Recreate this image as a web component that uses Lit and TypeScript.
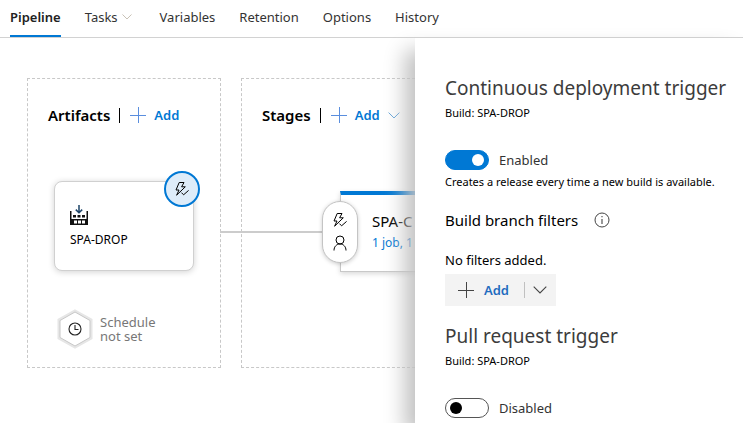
import { LitElement, html, css, svg } from "lit";
import { customElement, property, state } from "lit/decorators.js";

const plusIcon = svg`<svg class="plus" viewBox="0 0 16 16" width="16" height="16" aria-hidden="true"><path d="M8.5 0v16M0 8.5h16" fill="none" stroke="currentColor"/></svg>`;

const chevronIcon = (width: number) => svg`<svg class="chevron" viewBox="0 0 14 8" width=${width} aria-hidden="true"><path d="M0.7 0.7 7 7 13.3 0.7" fill="none" stroke="currentColor" stroke-width="1.1"/></svg>`;

const triggerIcon = svg`<svg viewBox="0 0 16 16" width="16" height="16" aria-hidden="true"><path d="M5.2 1.5H10L7.6 5.8H11.3L2.6 14.2 5 9H2Z" fill="none" stroke="currentColor" stroke-linejoin="round"/><path d="M7.4 11.6 9.6 13.8 14.6 9.4" fill="none" stroke="currentColor"/></svg>`;

const personIcon = svg`<svg viewBox="0 0 16 16" width="16" height="16" aria-hidden="true"><circle cx="8" cy="5" r="4" fill="none" stroke="currentColor"/><path d="M2 15.5C2 11.6 4.6 9 8 9S14 11.6 14 15.5" fill="none" stroke="currentColor"/></svg>`;

const buildIcon = svg`<svg viewBox="0 0 18 20" width="18" height="20" aria-hidden="true"><path d="M9 0v8M5.8 4.6 9 7.8 12.2 4.6" fill="none" stroke="#1d4468" stroke-width="1.5"/><path d="M0 6h1.5v8h15V6H18v14H0Z" fill="#111"/><path d="M3 10h3v2.5H3zM7.5 10h3v2.5h-3zM12 10h3v2.5h-3z" fill="#111"/><path d="M4 15.5h3v3H4zM8 15.5h3v3H8zM12 15.5h3v3h-3z" fill="#fff"/></svg>`;

const scheduleIcon = svg`<svg viewBox="0 0 36 40" width="36" height="40" aria-hidden="true"><path d="M18 2 34 11V29L18 38 2 29V11Z" fill="#fff" stroke="#e6e6e6" stroke-width="3"/><path d="M18 3 33 11.5V28.5L18 37 3 28.5V11.5Z" fill="#fff" stroke="#c8c8c8"/><circle cx="18" cy="20" r="6" fill="none" stroke="#222" stroke-width="1.1"/><path d="M18 16v4.5h3.5" fill="none" stroke="#222" stroke-width="1.1"/></svg>`;

const infoIcon = svg`<svg viewBox="0 0 16 16" width="16" height="16" aria-hidden="true"><circle cx="8" cy="8" r="7" fill="none" stroke="#444"/><path d="M8 7v5M8 4v1.3" stroke="#444" stroke-width="1.1"/></svg>`;

const controls = css`
  * { box-sizing: border-box; }
  h2, h3, p { margin: 0; font-weight: 400; }
  svg { display: block; flex: none; }
  button { font: inherit; color: inherit; background: none; border: 0; padding: 0; cursor: pointer; }
`;

@customElement("pipeline-tabs")
class PipelineTabs extends LitElement {
  @state() current = "Pipeline";
  tabs = ["Pipeline", "Tasks", "Variables", "Retention", "Options", "History"];

  static styles = [controls, css`
    :host { display: block; }
    nav { display: flex; gap: 24px; height: 38px; padding: 0 10px; border-bottom: 1px solid #d2d2d2; }
    a { display: flex; align-items: center; gap: 4px; padding-bottom: 1px; color: #333; text-decoration: none; border-bottom: 2px solid transparent; }
    a.current { border-bottom-color: #0078d4; font-weight: 600; color: #222; }
    .chevron { color: #b8b0a0; margin-right: 4px; }
  `];

  render() {
    return html`<nav>${this.tabs.map((name) => html`
      <a href="#${name}" class=${name === this.current ? "current" : ""} @click=${() => (this.current = name)}>${name}${name === "Tasks" ? chevronIcon(10) : ""}</a>`)}</nav>`;
  }
}

@customElement("toggle-switch")
class ToggleSwitch extends LitElement {
  @property({ type: Boolean }) on = false;

  static styles = [controls, css`
    :host { display: block; }
    label { display: flex; align-items: center; gap: 10px; height: 20px; color: #333; }
    input { appearance: none; display: flex; align-items: center; width: 44px; height: 20px; margin: 0; padding: 0 4px; border: 1px solid #555; border-radius: 10px; background: #fff; }
    input::before { content: ""; width: 12px; height: 12px; border-radius: 6px; background: #000; }
    input:checked { justify-content: flex-end; background: #0078d4; border-color: #0078d4; }
    input:checked::before { background: #fff; }
  `];

  render() {
    return html`<label><input type="checkbox" role="switch" .checked=${this.on}
      @change=${(e: Event) => (this.on = (e.target as HTMLInputElement).checked)}>${this.on ? "Enabled" : "Disabled"}</label>`;
  }
}

@customElement("pipeline-canvas")
class PipelineCanvas extends LitElement {
  static styles = [controls, css`
    :host { display: flex; align-items: flex-start; gap: 20px; padding: 40px 0 40px 27px; overflow: hidden; }
    .group { flex: none; height: 290px; border: 1px dashed #c8c8c8; padding: 20px; }
    .artifacts { width: 194px; }
    .stages { width: 320px; }
    .head { display: flex; align-items: center; height: 32px; color: #000; }
    .head h2 { font-size: 15px; font-weight: 600; line-height: 32px; }
    .bar { width: 1px; height: 15px; margin: 0 10px 0 9px; background: #000; }
    .add { display: flex; align-items: center; gap: 8px; color: #0078d4; font-weight: 600; }
    .plus { color: #5a8ede; }
    .add .chevron { color: #5b9fd8; }
    .artifact { position: relative; display: flex; flex-direction: column; gap: 5px; width: 140px; height: 90px; margin: 50px 0 38px 6px; padding: 23px 15px; border: 1px solid #d0d0d0; border-radius: 8px; background: #fff; box-shadow: 0 1px 6px rgba(0, 0, 0, .18); color: #000; font-size: 12px; line-height: 20px; }
    .trigger { position: absolute; top: -11px; right: -7px; display: grid; place-items: center; width: 36px; height: 36px; border: 2px solid #0078d4; border-radius: 18px; background: #deecf9; }
    .schedule { display: flex; align-items: center; gap: 7px; margin-left: 9px; color: #777; line-height: 14px; text-align: left; }
    .flow { display: flex; align-items: center; margin: 60px 0 0 -42px; }
    .link { width: 102px; height: 2px; background: #ccc; }
    .conditions { z-index: 1; display: flex; flex-direction: column; justify-content: center; align-items: center; gap: 7px; width: 36px; height: 62px; border: 1px solid #c4c4c4; border-radius: 18px; background: #fff; box-shadow: 0 1px 4px rgba(0, 0, 0, .2); }
    .stage { flex: 1; height: 81px; margin-left: -18px; padding: 16px 31px; border: 1px solid #c8c8c8; border-top: 4px solid #0078d4; background: #fff; box-shadow: 0 2px 5px rgba(0, 0, 0, .15); color: #000; white-space: nowrap; }
    .stage h3 { font-size: 15px; line-height: 20px; }
    .stage a { color: #0078d4; font-size: 12px; line-height: 24px; text-decoration: none; }
  `];

  render() {
    return html`
      <section class="group artifacts">
        <div class="head"><h2>Artifacts</h2><span class="bar"></span><button class="add">${plusIcon}Add</button></div>
        <div class="artifact">${buildIcon}<span>SPA-DROP</span>
          <button class="trigger" aria-label="Continuous deployment trigger">${triggerIcon}</button>
        </div>
        <button class="schedule">${scheduleIcon}<span>Schedule<br>not set</span></button>
      </section>
      <section class="group stages">
        <div class="head"><h2>Stages</h2><span class="bar"></span><button class="add">${plusIcon}Add${chevronIcon(12)}</button></div>
        <div class="flow">
          <span class="link"></span>
          <button class="conditions" aria-label="Pre-deployment conditions">${triggerIcon}${personIcon}</button>
          <div class="stage"><h3>SPA-C</h3><a href="#stage">1 job, 1</a></div>
        </div>
      </section>`;
  }
}

@customElement("trigger-panel")
class TriggerPanel extends LitElement {
  static styles = [controls, css`
    :host { display: block; box-sizing: border-box; padding: 36px 0 0 30px; background: #fff; white-space: nowrap; color: #000; }
    h2 { font-size: 19px; line-height: 28px; color: #3c3c3c; }
    .source { margin: 3px 0 29px; font-size: 11px; line-height: 16px; }
    .note { margin-top: 4px; font-size: 11px; line-height: 16px; }
    .filters { display: flex; align-items: center; gap: 16px; margin: 18px 0; }
    h3 { font-size: 15px; line-height: 24px; }
    .empty { line-height: 20px; }
    .split { display: inline-flex; align-items: center; height: 32px; margin: 4px 0 16px; background: #f3f3f3; }
    .add { display: flex; align-items: center; gap: 10px; height: 32px; padding: 0 15px 0 13px; color: #1f6cbf; font-weight: 600; }
    .plus { color: #444; }
    .more { display: flex; align-items: center; height: 16px; padding: 0 9px 0 8px; border-left: 1px solid #c0c0c0; color: #444; }
  `];

  render() {
    return html`
      <h2>Continuous deployment trigger</h2>
      <p class="source">Build: SPA-DROP</p>
      <toggle-switch on></toggle-switch>
      <p class="note">Creates a release every time a new build is available.</p>
      <div class="filters"><h3>Build branch filters</h3><button aria-label="More information">${infoIcon}</button></div>
      <p class="empty">No filters added.</p>
      <div class="split"><button class="add">${plusIcon}Add</button><button class="more" aria-label="More add options">${chevronIcon(14)}</button></div>
      <h2>Pull request trigger</h2>
      <p class="source">Build: SPA-DROP</p>
      <toggle-switch></toggle-switch>`;
  }
}

@customElement("app-root")
class AppRoot extends LitElement {
  static styles = css`
    :host { display: flex; flex-direction: column; height: 100vh; overflow: hidden; background: #fff; font: 13px/20px "Noto Sans", "Open Sans", sans-serif; }
    pipeline-tabs { flex: none; }
    main { flex: 1; display: flex; min-height: 0; }
    pipeline-canvas { flex: 1; min-width: 0; }
    trigger-panel { position: relative; flex: none; width: 328px; box-shadow: -10px 12px 20px #c0c0c0; }
  `;

  render() {
    return html`<pipeline-tabs></pipeline-tabs><main><pipeline-canvas></pipeline-canvas><trigger-panel></trigger-panel></main>`;
  }
}
